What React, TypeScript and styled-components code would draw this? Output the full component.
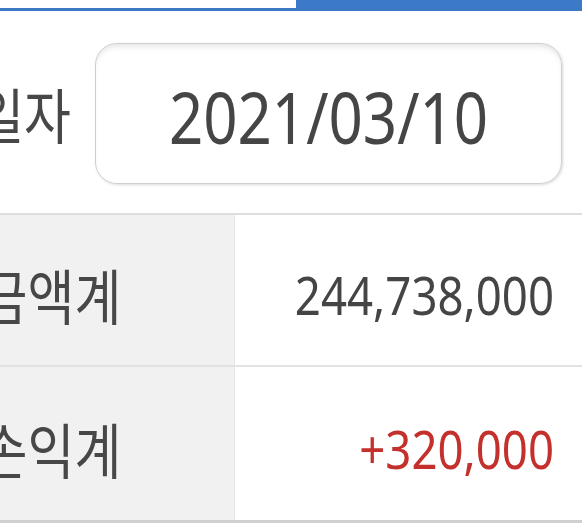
import React from "react";
import styled, { createGlobalStyle } from "styled-components";

const GlobalStyle = createGlobalStyle`
  html, body {
    margin: 0;
    padding: 0;
    background: #ffffff;
    overflow: hidden;
  }
  body {
    font-family: "Noto Sans", "Noto Sans CJK KR", sans-serif;
    color: #444444;
  }
`;

type Summary = { label: string; value: string; tone?: "plain" | "profit" };

const rows: Summary[] = [
  { label: "금액계", value: "244,738,000" },
  { label: "손익계", value: "+320,000", tone: "profit" },
];

export default function App() {
  return (
    <>
      <GlobalStyle />
      <Page>
        <TabBar>
          <Tab />
          <Tab active />
        </TabBar>
        <DateRow>
          <DateLabel>
            <Tall>일자</Tall>
          </DateLabel>
          <DateBox>
            <Tall>2021/03/10</Tall>
          </DateBox>
        </DateRow>
        <Table>
          {rows.map((row) => (
            <Row key={row.label}>
              <LabelCell>
                <Tall>{row.label}</Tall>
              </LabelCell>
              <ValueCell tone={row.tone ?? "plain"}>
                <Tall>{row.value}</Tall>
              </ValueCell>
            </Row>
          ))}
        </Table>
      </Page>
    </>
  );
}

const Page = styled.div`
  width: 722px;
  margin-left: -140px;
  display: flex;
  flex-direction: column;
`;

const TabBar = styled.div`
  height: 8px;
  display: flex;
  border-bottom: 3px solid #3c79c7;
`;

const Tab = styled.div<{ active?: boolean }>`
  flex: 1;
  background: ${(p) => (p.active ? "#3c79c7" : "#ffffff")};
  &:first-child {
    flex: 0 0 436px;
  }
`;

/* the capture is taller than it is wide, so glyphs read stretched */
const Tall = styled.span`
  display: inline-block;
  transform: scaleY(1.18);
  transform-origin: center;
`;

const DateRow = styled.div`
  height: 202px;
  display: flex;
  align-items: center;
  padding-right: 20px;
  box-sizing: border-box;
`;

const DateLabel = styled.div`
  width: 235px;
  padding-right: 24px;
  padding-top: 6px;
  box-sizing: border-box;
  text-align: right;
  font-size: 51px;
  line-height: 1;
  color: #474747;
`;

const DateBox = styled.div`
  flex: 1;
  height: 141px;
  margin-top: 2px;
  padding-top: 8px;
  border: 1.5px solid #cfcfcf;
  border-radius: 22px;
  box-sizing: border-box;
  display: flex;
  align-items: center;
  justify-content: center;
  font-size: 60px;
  color: #454545;
  box-shadow: inset 0 5px 6px -3px rgba(0, 0, 0, 0.12),
    1px 1px 3px rgba(0, 0, 0, 0.15);
`;

const Table = styled.div`
  border-top: 2px solid #dedede;
  border-bottom: 3px solid #d0d0d0;
  display: flex;
  flex-direction: column;
`;

const Row = styled.div`
  height: 150px;
  display: flex;
  & + & {
    border-top: 2px solid #e2e2e2;
    height: 153px;
  }
`;

const LabelCell = styled.div`
  width: 375px;
  padding-top: 8px;
  padding-left: 8px;
  box-sizing: border-box;
  background: #f1f1f1;
  border-right: 1px solid #e6e6e6;
  display: flex;
  align-items: center;
  justify-content: center;
  font-size: 51px;
  color: #474747;
`;

const ValueCell = styled.div<{ tone: "plain" | "profit" }>`
  flex: 1;
  display: flex;
  align-items: center;
  justify-content: flex-end;
  padding-right: 28px;
  padding-top: 8px;
  font-size: 45.6px;
  color: ${(p) => (p.tone === "profit" ? "#c4302b" : "#454545")};
`;
